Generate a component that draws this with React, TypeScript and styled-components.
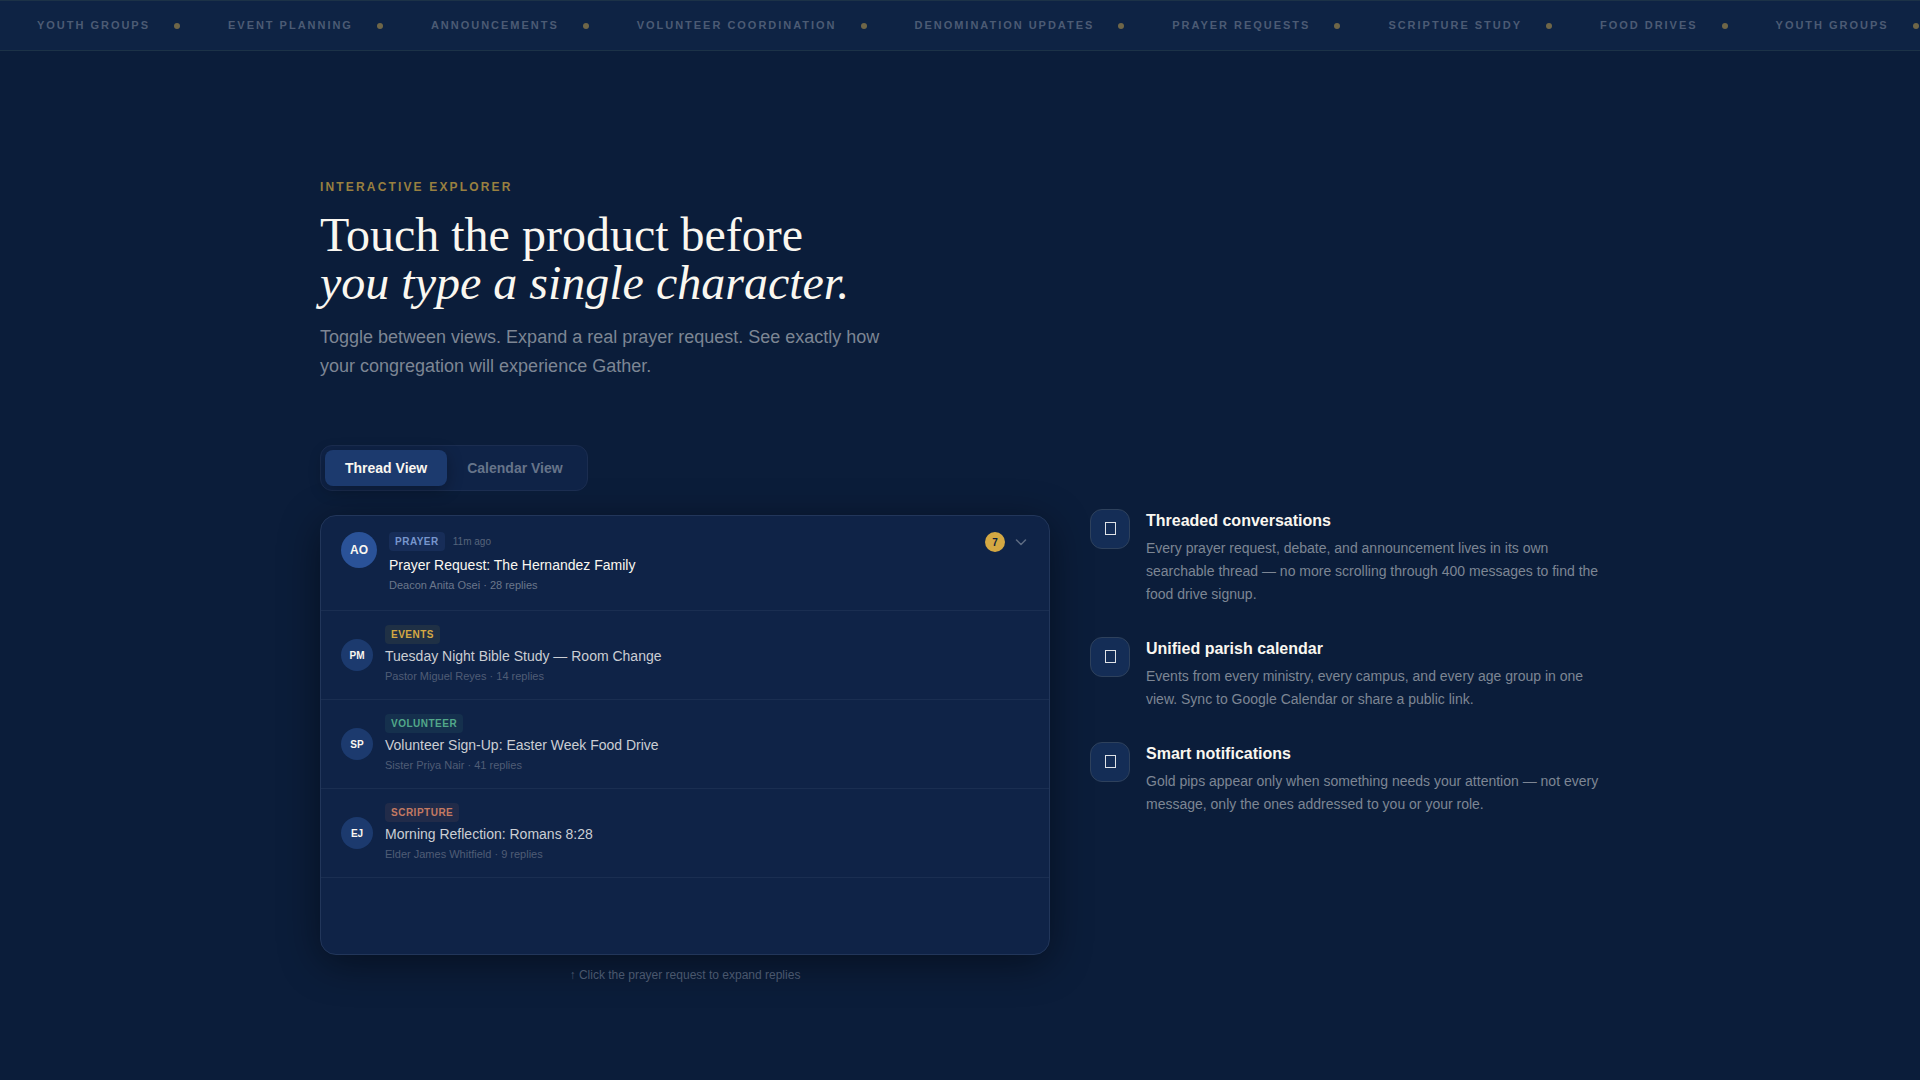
import React, { useState } from 'react';
import styled, { createGlobalStyle, css } from 'styled-components';

const sans = '"Liberation Sans", Arial, sans-serif';
const serif = '"Liberation Serif", "Times New Roman", serif';

const GlobalStyle = createGlobalStyle`
  *, *::before, *::after { box-sizing: border-box; }
  body {
    margin: 0;
    background: #0b1d3a;
    color: #faf7f0;
    font-family: ${sans};
    overflow-x: hidden;
  }
  h2, h3, p, ul { margin: 0; padding: 0; }
  ul { list-style: none; }
  button { font-family: inherit; border: 0; background: none; color: inherit; cursor: pointer; }
`;

const Page = styled.div`
  min-height: 100vh;
  overflow: hidden;
`;

const Ticker = styled.div`
  overflow: hidden;
  padding: 16px 0 16px 37px;
  background: #0e2344;
  border-top: 1px solid #1c3247;
  border-bottom: 1px solid #1c3247;
`;

const TickerTrack = styled.ul`
  display: flex;
  width: max-content;
`;

const TickerItem = styled.li`
  display: flex;
  align-items: center;
  gap: 24px;
  margin-right: 48px;
  font-size: 11px;
  line-height: 17px;
  font-weight: 700;
  letter-spacing: 0.18em;
  text-transform: uppercase;
  white-space: nowrap;
  color: #4c5b74;

  &::after {
    content: '';
    width: 6px;
    height: 6px;
    border-radius: 50%;
    background: #6f6648;
  }
`;

const Section = styled.section`
  max-width: 1328px;
  margin: 0 auto;
  padding: 128px 24px 96px;
`;

const Eyebrow = styled.p`
  margin-bottom: 16px;
  font-size: 12px;
  line-height: 16px;
  font-weight: 700;
  letter-spacing: 0.18em;
  text-transform: uppercase;
  color: #998040;
`;

const Heading = styled.h2`
  margin-bottom: 16px;
  font-family: ${serif};
  font-size: 48px;
  line-height: 48px;
  font-weight: 400;
`;

const Lead = styled.p`
  max-width: 576px;
  margin-bottom: 64px;
  font-size: 18px;
  line-height: 29px;
  color: #7d8694;
`;

const Columns = styled.div`
  display: grid;
  grid-template-columns: 73fr 51fr;
  gap: 40px;
  align-items: start;
`;

const Tabs = styled.div`
  display: inline-flex;
  margin-bottom: 24px;
  padding: 4px;
  border: 1px solid #1b2d50;
  border-radius: 12px;
  background: #0f2347;
`;

const Tab = styled.button<{ $active: boolean }>`
  padding: 10px 20px;
  border-radius: 8px;
  font-size: 14px;
  line-height: 16px;
  font-weight: 700;
  color: #66748a;
  ${({ $active }) =>
    $active &&
    css`
      background: #1c3a6e;
      color: #faf7f0;
      box-shadow: 0 4px 16px rgba(0, 0, 0, 0.3);
    `}
`;

const Panel = styled.div`
  min-height: 440px;
  overflow: hidden;
  border: 1px solid #22365a;
  border-radius: 16px;
  background: #0f2347;
  box-shadow: 0 8px 40px rgba(0, 0, 0, 0.45);
`;

const rowBase = css`
  display: flex;
  gap: 12px;
  width: 100%;
  border-bottom: 1px solid #1a2e51;
  text-align: left;
`;

const FeaturedRow = styled.button`
  ${rowBase}
  align-items: flex-start;
  padding: 16px 20px;
`;

const Row = styled.div`
  ${rowBase}
  align-items: center;
  padding: 14px 20px;
`;

const Avatar = styled.span<{ $large?: boolean }>`
  display: flex;
  flex: none;
  align-items: center;
  justify-content: center;
  width: ${({ $large }) => ($large ? 36 : 32)}px;
  height: ${({ $large }) => ($large ? 36 : 32)}px;
  border-radius: 50%;
  background: ${({ $large }) => ($large ? '#2a5298' : '#1c3a6e')};
  font-size: ${({ $large }) => ($large ? 12 : 10)}px;
  font-weight: 700;
  color: #faf7f0;
`;

const RowText = styled.span`
  display: flex;
  flex: 1;
  flex-direction: column;
  align-items: flex-start;
  gap: 2px;
`;

const TagLine = styled.span`
  display: flex;
  align-items: center;
  gap: 8px;
  padding-bottom: 2px;
`;

const Tag = styled.span<{ $color: string; $tint: string }>`
  padding: 2px 6px;
  border-radius: 4px;
  background: ${({ $tint }) => $tint};
  font-size: 10px;
  line-height: 15px;
  font-weight: 700;
  letter-spacing: 0.05em;
  text-transform: uppercase;
  color: ${({ $color }) => $color};
`;

const Age = styled.span`
  font-size: 10px;
  color: #56647b;
`;

const RowTitle = styled.span<{ $bright?: boolean }>`
  font-size: 14px;
  line-height: 20px;
  color: ${({ $bright }) => ($bright ? '#faf7f0' : '#cbced3')};
`;

const Meta = styled.span<{ $bright?: boolean }>`
  font-size: 11px;
  line-height: 17px;
  color: ${({ $bright }) => ($bright ? '#6b778b' : '#4f5d76')};
`;

const RowStatus = styled.span`
  display: flex;
  align-items: center;
  gap: 8px;
`;

const Count = styled.span`
  display: flex;
  align-items: center;
  justify-content: center;
  width: 20px;
  height: 20px;
  border-radius: 50%;
  background: #d4a843;
  font-size: 10px;
  font-weight: 700;
  color: #0b1d3a;
`;

const Chevron = styled.svg<{ $open: boolean }>`
  width: 16px;
  height: 16px;
  fill: none;
  stroke: #5d6b82;
  stroke-width: 1.5;
  stroke-linecap: round;
  stroke-linejoin: round;
  transform: rotate(${({ $open }) => ($open ? 180 : 0)}deg);
`;

const Note = styled.p`
  padding: 16px 20px;
  border-bottom: 1px solid #1a2e51;
  font-size: 14px;
  line-height: 20px;
  color: #cbced3;
`;

const Hint = styled.p`
  margin-top: 12px;
  font-size: 12px;
  line-height: 16px;
  text-align: center;
  color: #4a576d;
`;

const Features = styled.ul`
  display: flex;
  flex-direction: column;
  gap: 31px;
  padding-top: 64px;
`;

const Feature = styled.li`
  display: flex;
  align-items: flex-start;
  gap: 16px;
`;

const FeatureIcon = styled.span`
  display: flex;
  flex: none;
  align-items: center;
  justify-content: center;
  width: 40px;
  height: 40px;
  border: 1px solid #2e415c;
  border-radius: 12px;
  background: #142d56;

  svg {
    width: 12px;
    height: 14px;
    fill: none;
    stroke: #dfe2e6;
  }
`;

const FeatureTitle = styled.h3`
  margin-bottom: 4px;
  font-size: 16px;
  line-height: 24px;
  font-weight: 700;
`;

const FeatureText = styled.p`
  font-size: 14px;
  line-height: 23px;
  color: #7d8694;
`;

const topics = [
  'Youth Groups',
  'Event Planning',
  'Announcements',
  'Volunteer Coordination',
  'Denomination Updates',
  'Prayer Requests',
  'Scripture Study',
  'Food Drives',
  'Youth Groups',
];

const threads = [
  { initials: 'PM', tag: 'Events', color: '#d4a843', tint: '#1f3045', title: 'Tuesday Night Bible Study — Room Change', meta: 'Pastor Miguel Reyes · 14 replies' },
  { initials: 'SP', tag: 'Volunteer', color: '#52a88a', tint: '#15304d', title: 'Volunteer Sign-Up: Easter Week Food Drive', meta: 'Sister Priya Nair · 41 replies' },
  { initials: 'EJ', tag: 'Scripture', color: '#c47a62', tint: '#212b49', title: 'Morning Reflection: Romans 8:28', meta: 'Elder James Whitfield · 9 replies' },
];

const features = [
  { title: 'Threaded conversations', text: 'Every prayer request, debate, and announcement lives in its own searchable thread — no more scrolling through 400 messages to find the food drive signup.' },
  { title: 'Unified parish calendar', text: 'Events from every ministry, every campus, and every age group in one view. Sync to Google Calendar or share a public link.' },
  { title: 'Smart notifications', text: 'Gold pips appear only when something needs your attention — not every message, only the ones addressed to you or your role.' },
];

export default function App() {
  const [view, setView] = useState<'thread' | 'calendar'>('thread');
  const [open, setOpen] = useState(false);

  return (
    <Page>
      <GlobalStyle />
      <Ticker>
        <TickerTrack>
          {topics.map((topic, i) => (
            <TickerItem key={i}>{topic}</TickerItem>
          ))}
        </TickerTrack>
      </Ticker>
      <Section>
        <Eyebrow>Interactive Explorer</Eyebrow>
        <Heading>
          Touch the product before
          <br />
          <em>you type a single character.</em>
        </Heading>
        <Lead>
          Toggle between views. Expand a real prayer request. See exactly how your congregation will
          experience Gather.
        </Lead>
        <Columns>
          <div>
            <Tabs>
              <Tab type="button" $active={view === 'thread'} onClick={() => setView('thread')}>
                Thread View
              </Tab>
              <Tab type="button" $active={view === 'calendar'} onClick={() => setView('calendar')}>
                Calendar View
              </Tab>
            </Tabs>
            <Panel>
              {view === 'thread' && (
                <>
                  <FeaturedRow type="button" aria-expanded={open} onClick={() => setOpen(!open)}>
                    <Avatar $large>AO</Avatar>
                    <RowText>
                      <TagLine>
                        <Tag $color="#7796cd" $tint="#172d58">Prayer</Tag>
                        <Age>11m ago</Age>
                      </TagLine>
                      <RowTitle $bright>Prayer Request: The Hernandez Family</RowTitle>
                      <Meta $bright>Deacon Anita Osei · 28 replies</Meta>
                    </RowText>
                    <RowStatus>
                      <Count>7</Count>
                      <Chevron $open={open} viewBox="0 0 16 16" aria-hidden="true">
                        <path d="M3.5 6 8 10.5 12.5 6" />
                      </Chevron>
                    </RowStatus>
                  </FeaturedRow>
                  {open && <Note>28 replies</Note>}
                  {threads.map((t) => (
                    <Row key={t.initials}>
                      <Avatar>{t.initials}</Avatar>
                      <RowText>
                        <Tag $color={t.color} $tint={t.tint}>{t.tag}</Tag>
                        <RowTitle>{t.title}</RowTitle>
                        <Meta>{t.meta}</Meta>
                      </RowText>
                    </Row>
                  ))}
                </>
              )}
            </Panel>
            <Hint>↑ Click the prayer request to expand replies</Hint>
          </div>
          <Features>
            {features.map((f) => (
              <Feature key={f.title}>
                <FeatureIcon>
                  <svg viewBox="0 0 12 14" aria-hidden="true">
                    <rect x="1.5" y="0.5" width="10" height="12" />
                  </svg>
                </FeatureIcon>
                <div>
                  <FeatureTitle>{f.title}</FeatureTitle>
                  <FeatureText>{f.text}</FeatureText>
                </div>
              </Feature>
            ))}
          </Features>
        </Columns>
      </Section>
    </Page>
  );
}
